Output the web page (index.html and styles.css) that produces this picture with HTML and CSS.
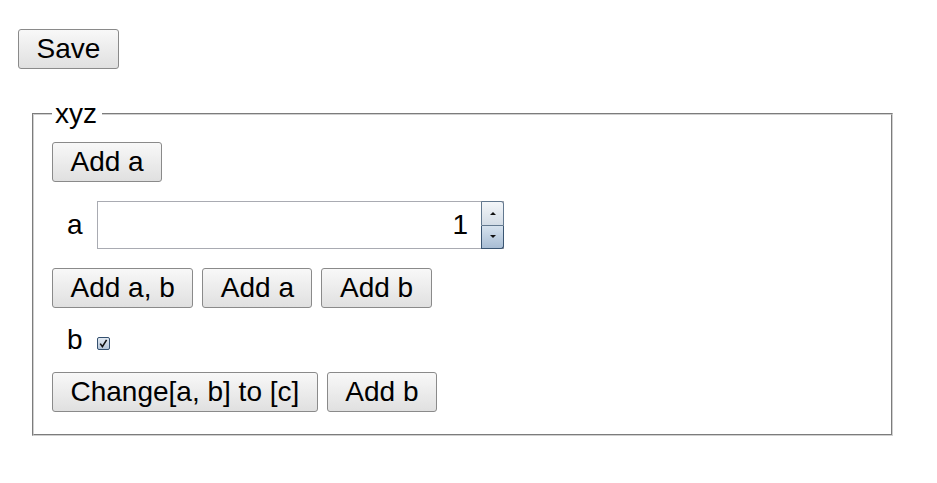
FILE: index.html
```html
<!DOCTYPE html>
<html lang="en">
<head>
    <meta charset="UTF-8">
    <meta name="viewport" content="width=device-width, initial-scale=1.0">
    <title>Form test</title>
    <link rel="stylesheet" href="styles.css">
</head>
<body>
    <div class="page">
        <button class="btn">Save</button>

        <fieldset class="group">
            <legend>xyz</legend>

            <div class="row">
                <button class="btn">Add a</button>
            </div>

            <div class="row field">
                <label class="name" for="field-a">a</label>
                <div class="spin-box">
                    <input id="field-a" type="number" value="1">
                    <div class="spinner">
                        <span class="spin up"><i></i></span>
                        <span class="spin down"><i></i></span>
                    </div>
                </div>
            </div>

            <div class="row buttons">
                <button class="btn">Add a, b</button>
                <button class="btn">Add a</button>
                <button class="btn">Add b</button>
            </div>

            <div class="row field check-row">
                <label class="name">b</label>
                <span class="check">
                    <svg width="13" height="13" viewBox="0 0 13 13">
                        <defs>
                            <linearGradient id="chk" x1="0" y1="0" x2="0" y2="1">
                                <stop offset="0" stop-color="#e4ebf3"/>
                                <stop offset="1" stop-color="#b3c4d8"/>
                            </linearGradient>
                        </defs>
                        <rect x="0.5" y="0.5" width="12" height="12" rx="1.5" fill="url(#chk)" stroke="#34506f"/>
                        <path d="M3.2 6.6 L5.4 9.6 L9.6 2.8" fill="none" stroke="#111" stroke-width="1.6"/>
                    </svg>
                </span>
            </div>

            <div class="row buttons">
                <button class="btn">Change[a, b] to [c]</button>
                <button class="btn">Add b</button>
            </div>
        </fieldset>
    </div>
</body>
</html>
```

FILE: styles.css
```css
body {
    margin: 0;
    padding: 29px 18px;
    font-family: "Liberation Sans", Arial, sans-serif;
    font-size: 28px;
    color: #000;
    background: #fff;
}
.btn {
    font: inherit;
    line-height: 32px;
    height: 40px;
    padding: 0 17.5px;
    border: 1px solid #8a8a8a;
    border-radius: 3px;
    background: linear-gradient(#f8f8f8, #e0e0e0);
    color: #000;
}
.group {
    margin: 29px 0 0 14px;
    width: 861px;
    box-sizing: border-box;
    border: 2px groove #d0d0d0;
    padding: 12px 18px 22px;
    display: flex;
    flex-direction: column;
    align-items: flex-start;
    gap: 19px;
}
.group legend {
    padding: 0 5px 0 3px;
    line-height: 32px;
}
.row {
    display: flex;
}
.buttons {
    gap: 9px;
}
.field {
    align-items: center;
}
.name {
    width: 45px;
    box-sizing: border-box;
    padding-left: 15px;
    line-height: 32px;
}
.spin-box {
    display: flex;
    width: 407px;
    height: 48px;
    box-sizing: border-box;
    border: 1px solid #a9abb2;
    background: #fff;
}
.spin-box input {
    flex: 1;
    min-width: 0;
    border: none;
    outline: none;
    font: inherit;
    text-align: right;
    padding: 0 13px 0 0;
    -moz-appearance: textfield;
}
.spin-box input::-webkit-inner-spin-button,
.spin-box input::-webkit-outer-spin-button {
    -webkit-appearance: none;
    margin: 0;
}
.spinner {
    width: 23px;
    margin: -1px -1px -1px 0;
    display: flex;
    flex-direction: column;
}
.spin {
    flex: 1;
    display: flex;
    align-items: center;
    justify-content: center;
    border: 1px solid #62788f;
}
.spin.up {
    border-top-right-radius: 3px;
    background: linear-gradient(#f3f6f9, #d3dce6);
}
.spin.down {
    border-top: none;
    border-color: #3a5572;
    border-bottom-right-radius: 3px;
    background: linear-gradient(#d6e2ee, #a8bdd4);
}
.spin i {
    width: 0;
    height: 0;
    border-left: 3px solid transparent;
    border-right: 3px solid transparent;
}
.spin.up i {
    border-bottom: 3px solid #111;
}
.spin.down i {
    border-top: 3px solid #111;
}
.check-row {
    height: 26px;
}
.check {
    display: flex;
    margin-top: 7px;
}
```
